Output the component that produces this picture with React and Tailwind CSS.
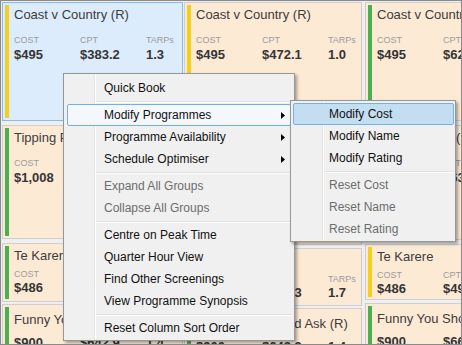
import React from 'react';

const FONT = "font-['Liberation_Sans',Arial,sans-serif]";

const COLUMNS = [
  {
    cls: 'w-[181px]',
    cards: [
      { title: 'Coast v Country (R)', bar: 'yellow', selected: true, variant: 'tall', h: 'h-[119px]', m: [['COST', '$495'], ['CPT', '$383.2'], ['TARPs', '1.3']] },
      { title: 'Tipping Point (R)', bar: 'green', variant: 'tall', h: 'h-[114px] mt-[4px]', m: [['COST', '$1,008'], ['CPT', '$672.0'], ['TARPs', '1.5']] },
      { title: 'Te Karere', bar: 'green', variant: 'compact', h: 'h-[59px] mt-[4px]', m: [['COST', '$486'], ['CPT', '$405.0'], ['TARPs', '1.2']] },
      { title: 'Funny You Should Ask (R)', bar: 'green', variant: 'bare', h: 'h-[60px] mt-[2px]', m: [['COST', '$900'], ['CPT', '$642.9'], ['TARPs', '1.4']] },
    ],
  },
  {
    cls: 'w-[178px] ml-[1px]',
    cards: [
      { title: 'Coast v Country (R)', bar: 'yellow', variant: 'tall', h: 'h-[119px]', m: [['COST', '$495'], ['CPT', '$472.1'], ['TARPs', '1.0']] },
      { title: 'Tipping Point (R)', bar: 'green', variant: 'tall', h: 'h-[120px] mt-[4px]', m: [['COST', '$1,008'], ['CPT', '$590.6'], ['TARPs', '1.7']] },
      { title: 'Te Karere', bar: 'green', variant: 'compact', h: 'h-[58px] mt-[3px]', m: [['COST', '$486'], ['CPT', '$285.3'], ['TARPs', '1.7']] },
      { title: 'Funny You Should Ask (R)', bar: 'green', variant: 'bare', h: 'h-[60px] mt-[2px]', m: [['COST', '$900'], ['CPT', '$642.9'], ['TARPs', '1.4']] },
    ],
  },
  {
    cls: 'w-[180px] ml-[3px]',
    cards: [
      { title: 'Coast v Country (R)', bar: 'green', variant: 'tall', h: 'h-[119px]', m: [['COST', '$495'], ['CPT', '$621.4'], ['TARPs', '0.8']] },
      { title: 'Tipping Point (R)', bar: 'green', variant: 'tall', h: 'h-[115px] mt-[4px]', m: [['COST', '$1,008'], ['CPT', '$630.0'], ['TARPs', '1.6']] },
      { title: 'Te Karere', bar: 'yellow', variant: 'compact', h: 'h-[56px] mt-[4px]', m: [['COST', '$486'], ['CPT', '$496.0'], ['TARPs', '1.0']] },
      { title: 'Funny You Should Ask (R)', bar: 'green', variant: 'bare', h: 'h-[60px] mt-[3px]', m: [['COST', '$900'], ['CPT', '$660.2'], ['TARPs', '1.4']] },
    ],
  },
];

const MAIN_MENU = [
  { label: 'Quick Book' },
  { sep: true },
  { label: 'Modify Programmes', sub: true, hot: true },
  { label: 'Programme Availability', sub: true },
  { label: 'Schedule Optimiser', sub: true },
  { sep: true },
  { label: 'Expand All Groups', disabled: true },
  { label: 'Collapse All Groups', disabled: true },
  { sep: true },
  { label: 'Centre on Peak Time' },
  { label: 'Quarter Hour View' },
  { label: 'Find Other Screenings' },
  { label: 'View Programme Synopsis' },
  { sep: true },
  { label: 'Reset Column Sort Order' },
];

const SUB_MENU = [
  { label: 'Modify Cost', selected: true },
  { label: 'Modify Name' },
  { label: 'Modify Rating' },
  { sep: true },
  { label: 'Reset Cost', disabled: true },
  { label: 'Reset Name', disabled: true },
  { label: 'Reset Rating', disabled: true },
];

function Card({ title, bar, selected, variant, h, m }) {
  const pt = variant === 'bare' ? 'pt-[5px]' : 'pt-[2px]';
  const rowGap = variant === 'tall' ? 'mt-[12px]' : variant === 'compact' ? 'mt-[5px]' : 'mt-[7px]';
  return (
    <div
      className={`flex shrink-0 border pl-[2px] py-[2px] overflow-hidden ${h} ${
        selected ? 'bg-[#dcecfc] border-[#86bbec]' : 'bg-[#fdead5] border-[#cfcfcf]'
      }`}
    >
      <div className={`w-[4px] shrink-0 ${bar === 'green' ? 'bg-[#4caf50]' : 'bg-[#f6cf1c]'}`} />
      <div className={`ml-[5px] flex-1 min-w-0 ${pt}`}>
        <div className="text-[13px] leading-[16px] text-[#3c3c3c] whitespace-nowrap">{title}</div>
        <div className={`flex ${rowGap}`}>
          {m.map(([label, value]) => (
            <div key={label} className="w-[66px] shrink-0">
              {variant !== 'bare' && (
                <div className="text-[9px] leading-[11px] text-[#9b9b9b]">{label}</div>
              )}
              <div className={`text-[13px] leading-[16px] font-bold text-[#353535] whitespace-nowrap ${variant === 'tall' ? 'mt-[1px]' : ''}`}>
                {value}
              </div>
            </div>
          ))}
        </div>
      </div>
    </div>
  );
}

function Arrow() {
  return (
    <svg width="4" height="7" viewBox="0 0 4 7" className="shrink-0">
      <path d="M0 0 L4 3.5 L0 7 Z" fill="#000" />
    </svg>
  );
}

function Separator({ indent }) {
  return (
    <div className={`h-[5px] flex flex-col justify-center ${indent}`}>
      <div className="h-px bg-[#e0e0e0]" />
      <div className="h-px bg-white" />
    </div>
  );
}

function MainMenu() {
  return (
    <div className="absolute left-[62px] top-[72px] w-[232px] border border-[#979797] bg-[#f0f0f0] pt-[3px] pb-[1px] px-[3px] shadow-[2px_2px_3px_rgba(0,0,0,0.35)] text-[12px]">
      <div className="absolute left-[30px] top-0 bottom-0 w-px bg-[#e2e3e3]" />
      <div className="absolute left-[31px] top-0 bottom-0 w-px bg-white" />
      {MAIN_MENU.map((item, i) =>
        item.sep ? (
          <Separator key={i} indent="ml-[29px]" />
        ) : (
          <div
            key={i}
            className={`relative flex items-center h-[22px] pl-[36px] pr-[5px] rounded-[2px] border ${
              item.hot ? 'border-[#6fb1e3] bg-[#f4f8fc]' : 'border-transparent'
            } ${item.disabled ? 'text-[#6d6d6d]' : 'text-[#111]'}`}
          >
            <span className="flex-1 whitespace-nowrap">{item.label}</span>
            {item.sub && <Arrow />}
          </div>
        )
      )}
    </div>
  );
}

function SubMenu() {
  return (
    <div className="absolute left-[289px] top-[99px] w-[166px] border border-[#979797] bg-[#f0f0f0] pt-[2px] pb-[1px] pl-[2px] pr-[1px] shadow-[2px_2px_3px_rgba(0,0,0,0.35)] text-[12px]">
      <div className="absolute left-[31px] top-0 bottom-0 w-px bg-[#e2e3e3]" />
      <div className="absolute left-[32px] top-0 bottom-0 w-px bg-white" />
      {SUB_MENU.map((item, i) =>
        item.sep ? (
          <Separator key={i} indent="ml-[30px]" />
        ) : (
          <div
            key={i}
            className={`relative flex items-center h-[22px] pl-[35px] rounded-[2px] border ${
              item.selected ? 'border-[#72b4e4] bg-[#c3def1]' : 'border-transparent'
            } ${item.disabled ? 'text-[#6d6d6d]' : 'text-[#111]'}`}
          >
            <span className="whitespace-nowrap">{item.label}</span>
          </div>
        )
      )}
    </div>
  );
}

export default function App() {
  return (
    <div className={`relative w-[462px] h-[345px] overflow-hidden border border-[#8a8a8a] bg-[#efefef] ${FONT}`}>
      <div className="flex pt-[1px] pl-[1px]">
        {COLUMNS.map((col, ci) => (
          <div key={ci} className={`flex flex-col shrink-0 ${col.cls}`}>
            {col.cards.map((c, i) => (
              <Card key={i} {...c} />
            ))}
          </div>
        ))}
      </div>
      <MainMenu />
      <SubMenu />
    </div>
  );
}
